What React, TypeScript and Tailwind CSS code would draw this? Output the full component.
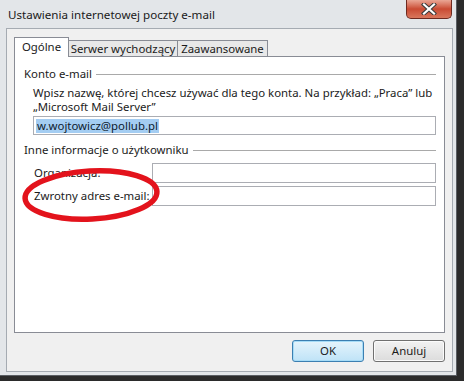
import React from "react";

const font = { fontFamily: "'Noto Sans', 'Open Sans', sans-serif" };

function CloseButton() {
  return (
    <div className="mr-[4px] w-[46px] h-[19px] rounded-b-[5px] border border-t-0 border-[#6e2a20] bg-gradient-to-b from-[#e9a695] via-[#c94a33] to-[#d9765c] flex items-center justify-center">
      <svg width="16" height="12" viewBox="0 0 16 12">
        <path d="M3 1.5 L13 10.5 M13 1.5 L3 10.5" stroke="#3b3b3b" strokeWidth="4.2" strokeLinecap="square" />
        <path d="M3 1.5 L13 10.5 M13 1.5 L3 10.5" stroke="#ffffff" strokeWidth="2.2" strokeLinecap="square" />
      </svg>
    </div>
  );
}

function GroupTitle({ children }: { children: React.ReactNode }) {
  return (
    <div className="flex items-center gap-[4px] h-[14px]">
      <span className="leading-none whitespace-nowrap">{children}</span>
      <div className="flex-1 h-px bg-[#a9a9a9]" />
    </div>
  );
}

export default function App() {
  return (
    <div className="w-[464px] h-[381px] bg-[#2b2b2b] overflow-hidden text-[11.4px] text-[#1b1b1b] whitespace-nowrap" style={font}>
      <div className="relative w-[457px] h-[376px] bg-[#e3e6e9] border-r border-b border-[#5a5e63] flex flex-col">
        {/* title bar */}
        <div className="h-[28px] flex justify-between">
          <div className="pl-[8px] pt-[6px] text-[11.6px] text-[#1a1a1a]">Ustawienia internetowej poczty e-mail</div>
          <CloseButton />
        </div>

        {/* client area */}
        <div className="ml-[6px] mr-[3px] mb-[3px] flex-1 bg-[#f0f0f0] border border-[#a5abb2] flex flex-col pl-[7px] pr-[7px] pt-[8px]">
          {/* tabs */}
          <div className="flex items-end h-[20px] relative z-10">
            <div className="w-[55px] h-[20px] bg-white border border-b-0 border-[#898c95] flex items-center justify-center pb-[1px]">
              Ogólne
            </div>
            <div className="w-[109px] h-[17px] bg-[#e8e8e8] border border-l-0 border-[#898c95] flex items-center justify-center">
              Serwer wychodzący
            </div>
            <div className="w-[90px] h-[17px] bg-[#e8e8e8] border border-l-0 border-[#898c95] flex items-center justify-center">
              Zaawansowane
            </div>
          </div>

          {/* panel */}
          <div className="-mt-px h-[277px] bg-white border border-[#898c95] pl-[9px] pr-[8px] pt-[10px]">
            <GroupTitle>Konto e-mail</GroupTitle>
            <div className="pl-[9px] pt-[5px] leading-[14px]">
              <p>Wpisz nazwę, której chcesz używać dla tego konta. Na przykład: „Praca” lub</p>
              <p>„Microsoft Mail Server”</p>
            </div>
            <div className="ml-[9px] mt-[2px] h-[19px] border border-[#abadb3] flex items-center pl-[2px]">
              <span className="bg-[#a4cdf2] px-[1px] leading-[14px] text-[#0d1b2e]">w.wojtowicz@pollub.pl</span>
            </div>

            <div className="mt-[8px]">
              <GroupTitle>Inne informacje o użytkowniku</GroupTitle>
            </div>
            <div className="pl-[10px] pt-[6px] flex flex-col gap-[3px]">
              <div className="flex items-center h-[20px]">
                <span className="w-[118px]">Organizacja:</span>
                <div className="flex-1 h-[20px] border border-[#abadb3]" />
              </div>
              <div className="flex items-center h-[20px]">
                <span className="w-[118px]">Zwrotny adres e-mail:</span>
                <div className="flex-1 h-[20px] border border-[#abadb3]" />
              </div>
            </div>
          </div>

          {/* buttons */}
          <div className="flex justify-end gap-[9px] mt-[7px]">
            <button className="w-[72px] h-[22px] rounded-[3px] border border-[#3c7fb1] bg-gradient-to-b from-[#e5f4fc] to-[#bfe3f7] shadow-[inset_0_0_0_1px_#a6dcf7]">
              OK
            </button>
            <button className="w-[72px] h-[22px] rounded-[3px] border border-[#707070] bg-gradient-to-b from-[#f2f2f2] to-[#dcdcdc] shadow-[inset_0_0_0_1px_#fbfbfb]">
              Anuluj
            </button>
          </div>
        </div>

        {/* red hand-drawn annotation */}
        <svg className="absolute left-0 top-0 pointer-events-none" width="464" height="381">
          <ellipse cx="91" cy="195" rx="66" ry="24" transform="rotate(-3 91 195)" fill="none" stroke="#e3131c" strokeWidth="5.5" />
        </svg>
      </div>
    </div>
  );
}
